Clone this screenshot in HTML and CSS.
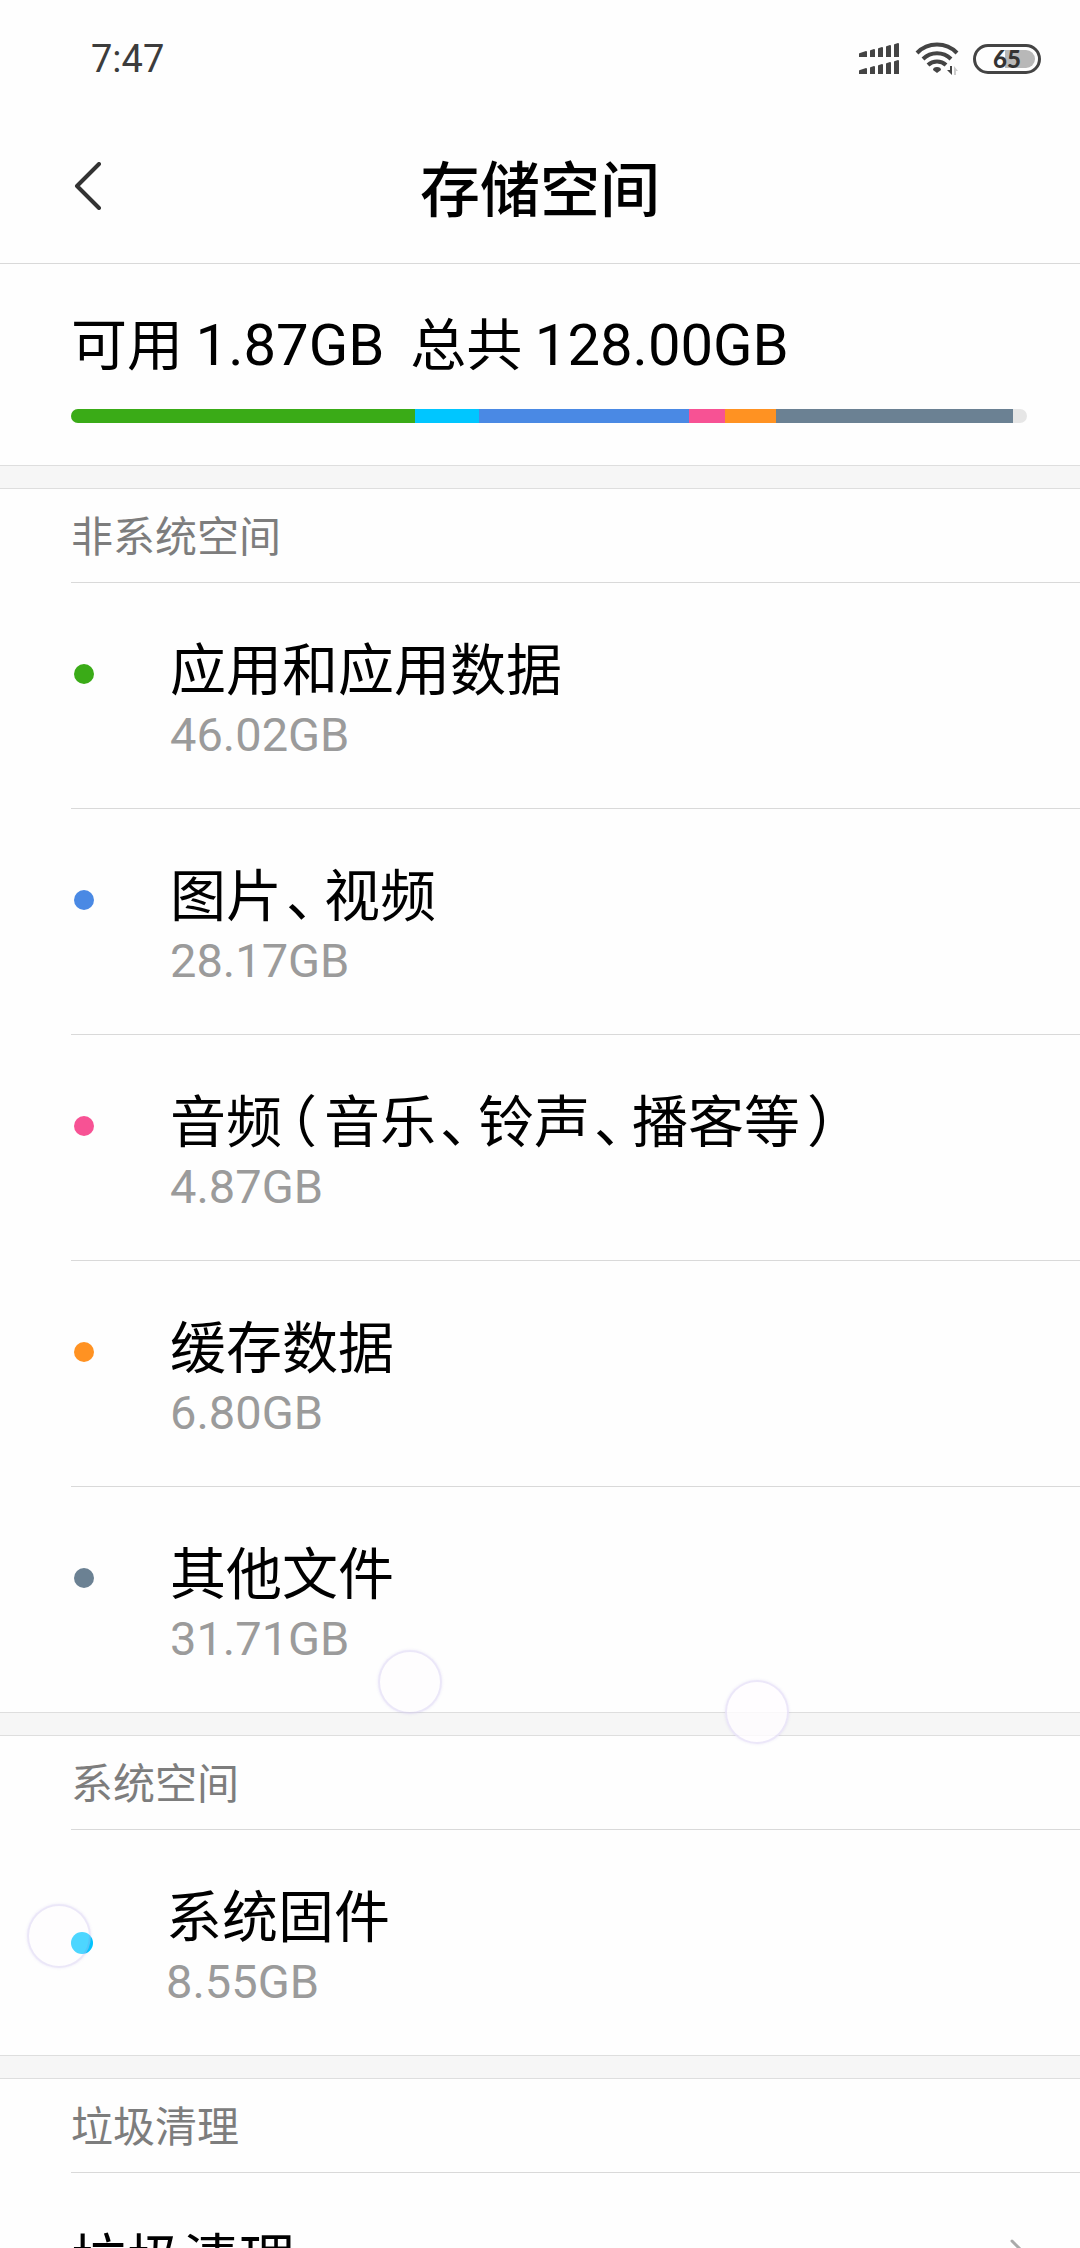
FILE: index.html
```html
<!DOCTYPE html>
<html lang="zh-CN">
<head>
    <meta charset="UTF-8">
    <meta name="viewport" content="width=device-width, initial-scale=1.0">
    <title>存储空间</title>
    <link rel="stylesheet" href="styles.css">
</head>
<body>
    <div class="screen">
        <div class="status-bar">
            <span class="time">7:47</span>
            <div class="status-icons">
                <svg class="icon-signal" width="42" height="32" viewBox="0 0 42 32" fill="#444">
                    <path d="M0 11q0-1 1-1l6-2q1 0 1 1v5H0zM11 8q0-1 1-1l3-1q1 0 1 1v7h-5zM19 6q0-1 1-1l3-1q1 0 1 1v9h-5zM27 4q0-1 1-1l3-1q1 0 1 1v11h-5zM35 2q0-1 1-1l3-1q1 0 1 1v13h-5z"/>
                    <path transform="translate(0 17)" d="M0 11q0-1 1-1l6-2q1 0 1 1v5H0zM11 8q0-1 1-1l3-1q1 0 1 1v7h-5zM19 6q0-1 1-1l3-1q1 0 1 1v9h-5zM27 4q0-1 1-1l3-1q1 0 1 1v11h-5zM35 2q0-1 1-1l3-1q1 0 1 1v13h-5z"/>
                </svg>
                <svg class="icon-wifi" width="44" height="34" viewBox="0 0 44 34" fill="none" stroke="#444" stroke-width="4">
                    <path d="M2 11a28 28 0 0 1 40 0M8 17a20 20 0 0 1 28 0M13 23a13 13 0 0 1 18 0"/>
                    <path d="M22 31l-4-3q0-3 4-3t4 3z" fill="#444" stroke="none"/>
                    <path d="M37 24v9l-5-5h3v-4z" fill="#444" stroke="none"/>
                    <path d="M39 33v-9l4 5h-2v4z" fill="#ccc" stroke="none"/>
                </svg>
                <span class="battery"><span class="battery-level"></span><span class="battery-text">65</span></span>
            </div>
        </div>

        <header class="title-bar">
            <button class="back" type="button" aria-label="返回">
                <svg width="30" height="48" viewBox="0 0 30 48" fill="none" stroke="#333" stroke-width="4" stroke-linecap="round" stroke-linejoin="round">
                    <path d="M27 2L5 24l22 22"/>
                </svg>
            </button>
            <h1>存储空间</h1>
        </header>

        <section class="summary">
            <p class="summary-text"><span>可用 <span class="amount">1.87GB</span></span> <span>总共 <span class="amount">128.00GB</span></span></p>
            <div class="usage-bar">
                <div class="apps" style="width: 35.95%"></div>
                <div class="system" style="width: 6.68%"></div>
                <div class="media" style="width: 22.01%"></div>
                <div class="audio" style="width: 3.8%"></div>
                <div class="cache" style="width: 5.31%"></div>
                <div class="other" style="width: 24.77%"></div>
            </div>
        </section>

        <section class="group">
            <h2>非系统空间</h2>
            <ul>
                <li class="row">
                    <span class="dot apps"></span>
                    <div>
                        <h3>应用和应用数据</h3>
                        <p>46.02GB</p>
                    </div>
                </li>
                <li class="row">
                    <span class="dot media"></span>
                    <div>
                        <h3>图片<span class="comma">、</span>视频</h3>
                        <p>28.17GB</p>
                    </div>
                </li>
                <li class="row">
                    <span class="dot audio"></span>
                    <div>
                        <h3>音频<span class="paren">（</span>音乐<span class="comma">、</span>铃声<span class="comma">、</span>播客等<span class="paren">）</span></h3>
                        <p>4.87GB</p>
                    </div>
                </li>
                <li class="row">
                    <span class="dot cache"></span>
                    <div>
                        <h3>缓存数据</h3>
                        <p>6.80GB</p>
                    </div>
                </li>
                <li class="row">
                    <span class="dot other"></span>
                    <div>
                        <h3>其他文件</h3>
                        <p>31.71GB</p>
                    </div>
                </li>
            </ul>
        </section>

        <section class="group">
            <h2>系统空间</h2>
            <ul>
                <li class="row row-system">
                    <span class="dot system"></span>
                    <div>
                        <h3>系统固件</h3>
                        <p>8.55GB</p>
                    </div>
                </li>
            </ul>
        </section>

        <section class="group">
            <h2>垃圾清理</h2>
            <a class="row-link" href="#">
                <span>垃圾清理</span>
                <svg width="18" height="32" viewBox="0 0 18 32" fill="none" stroke="#aaa" stroke-width="3" stroke-linecap="round" stroke-linejoin="round">
                    <path d="M2 2l14 14L2 30"/>
                </svg>
            </a>
        </section>

        <!-- bubbles floating over the list -->
        <span class="bubble bubble-1"></span>
        <span class="bubble bubble-2"></span>
        <span class="bubble bubble-3"></span>
    </div>
</body>
</html>
```
FILE: styles.css
```css
*,
*::before {
    box-sizing: border-box;
}
body {
    margin: 0;
    background: #fefefe;
    color: #000;
    font-family: "Noto Sans CJK SC", sans-serif;
}
h1, h2, h3, p, ul {
    margin: 0;
    padding: 0;
    font-weight: inherit;
}
ul {
    list-style: none;
}
.screen {
    position: relative;
    height: 100vh;
    overflow: hidden;
}

/* status bar */
.status-bar {
    display: flex;
    justify-content: space-between;
    align-items: center;
    height: 116px;
    padding: 2px 39px 0 91px;
}
.time {
    font-family: Roboto, sans-serif;
    font-size: 38px;
    color: #3c3c3c;
}
.status-icons {
    display: flex;
    align-items: center;
    gap: 14px;
}
.battery {
    position: relative;
    display: flex;
    align-items: center;
    justify-content: center;
    width: 68px;
    height: 30px;
    border: 3px solid #444;
    border-radius: 15px;
}
.battery-level {
    position: absolute;
    top: 3px;
    right: 3px;
    bottom: 3px;
    width: 30px;
    background: #b8b8b8;
    border-radius: 0 9px 9px 0;
}
.battery-text {
    position: relative;
    font-family: Lato, sans-serif;
    font-size: 24px;
    line-height: 24px;
    font-weight: 900;
    color: #333;
}

/* title */
.title-bar {
    display: grid;
    grid-template-columns: 48px 1fr 48px;
    align-items: center;
    height: 148px;
    padding: 0 72px 8px;
    border-bottom: 1px solid #d9d9d9;
}
.back {
    display: flex;
    padding: 0;
    border: none;
    background: none;
    cursor: pointer;
}
h1 {
    font-size: 60px;
    line-height: 72px;
    font-weight: 500;
    text-align: center;
}

/* summary */
.summary {
    padding: 41px 53px 42px 71px;
}
.summary-text {
    display: flex;
    gap: 26px;
    font-size: 56px;
    line-height: 72px;
}
.amount {
    font-family: Roboto, sans-serif;
    font-size: 58px;
    line-height: 56px;
}
.usage-bar {
    display: flex;
    height: 14px;
    margin-top: 32px;
    background: #e6e6e6;
    border-radius: 7px;
    overflow: hidden;
}
.apps {
    background: #3aab17;
}
.system {
    background: #00c6ff;
}
.media {
    background: #4a89e4;
}
.audio {
    background: #f75294;
}
.cache {
    background: #ff9222;
}
.other {
    background: #6b8193;
}

/* lists */
.group {
    padding-left: 71px;
}
.group::before {
    content: "";
    display: block;
    height: 24px;
    margin-left: -71px;
    background: #f6f6f6;
    border-top: 1px solid #dedede;
    border-bottom: 1px solid #dedede;
}
h2 {
    height: 94px;
    font-size: 42px;
    line-height: 90px;
    color: #7d7d7d;
    border-bottom: 1px solid #d9d9d9;
}
.row {
    display: flex;
    align-items: flex-start;
    gap: 76px;
    height: 226px;
    padding: 42px 0 0 3px;
    border-bottom: 1px solid #d9d9d9;
}
.row:last-child {
    height: 225px;
    border-bottom: none;
}
.row-system {
    gap: 73px;
    padding-left: 0;
}
.dot {
    width: 20px;
    height: 20px;
    margin-top: 39px;
    border-radius: 50%;
}
.row-system .dot {
    width: 22px;
    height: 22px;
    margin-top: 60px;
}
h3 {
    font-size: 56px;
    line-height: 82px;
}
.row p {
    font-family: Roboto, sans-serif;
    font-size: 47px;
    line-height: 56px;
    color: #9b9b9b;
}
/* half-width punctuation with a quarter em of air */
.comma,
.paren {
    font-feature-settings: "halt";
}
.comma {
    margin: 0 10px 0 4px;
}
.paren {
    margin: 0 7px;
}
.row-link {
    display: flex;
    justify-content: space-between;
    padding: 42px 52px 42px 0;
    font-size: 56px;
    line-height: 82px;
    color: #000;
    text-decoration: none;
}
.row-link svg {
    margin-top: 24px;
}

.bubble {
    position: absolute;
    width: 64px;
    height: 64px;
    border: 2px solid rgba(120, 100, 210, 0.14);
    border-radius: 50%;
    background: rgba(255, 253, 255, 0.3);
    box-shadow: 0 0 3px rgba(120, 100, 210, 0.14);
}
.bubble-1 {
    left: 378px;
    top: 1650px;
}
.bubble-2 {
    left: 725px;
    top: 1680px;
    background: rgba(255, 252, 255, 0.8);
}
.bubble-3 {
    left: 27px;
    top: 1904px;
}
```
